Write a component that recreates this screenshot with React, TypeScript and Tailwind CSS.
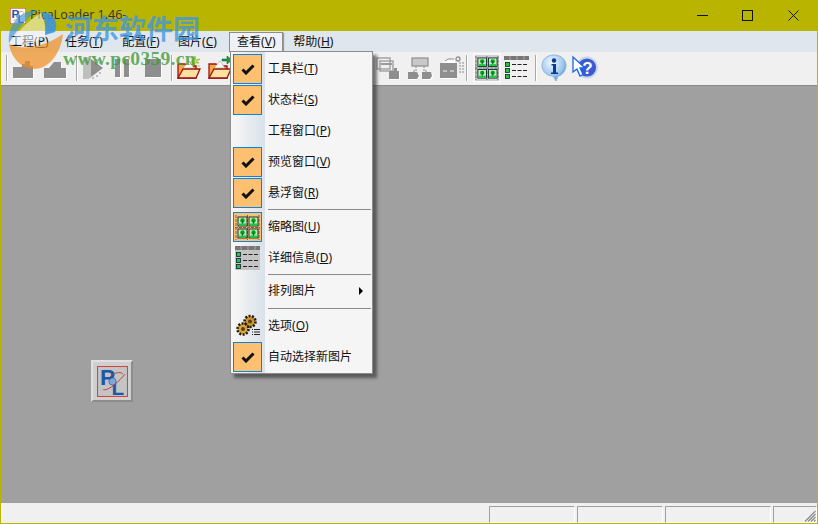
import type { ReactNode } from 'react'

const cjk = 'font-["Noto_Sans","Noto_Sans_CJK_SC",sans-serif]'

const menuBar = [
  { name: '工程', key: 'P', cls: 'ml-[9px]' },
  { name: '任务', key: 'T', cls: 'ml-[16.4px]' },
  { name: '配置', key: 'F', cls: 'ml-[19.4px]' },
  { name: '图片', key: 'C', cls: 'ml-[18.4px]' },
]

function Label({ name, k }: { name: string; k?: string }) {
  return (
    <span className="whitespace-nowrap">
      {name}
      {k && (
        <>
          (<span className="underline">{k}</span>)
        </>
      )}
    </span>
  )
}

function Check() {
  return (
    <svg width="14" height="12" viewBox="0 0 14 12">
      <path d="M1.5 6.5 L5 10 L12.5 2.5" fill="none" stroke="#111" strokeWidth="3" />
    </svg>
  )
}

function ThumbIcon({ size = 25 }: { size?: number }) {
  const cell = (x: number, y: number) => (
    <g key={`${x}-${y}`}>
      <rect x={x} y={y} width="9" height="9" fill="#b8ecb0" stroke="#123" strokeWidth="0.9" />
      <circle cx={x + 4.5} cy={y + 3.5} r="2.2" fill="#069a1c" />
      <rect x={x + 4} y={y + 4} width="1" height="3" fill="#063" />
      <rect x={x + 1} y={y + 6.5} width="7" height="2" fill="#16c93a" />
    </g>
  )
  return (
    <svg width={size} height={size} viewBox="0 0 25 25">
      <path d="M0 12.500H25M1 0V25M12.500 0V25M24 0V25" stroke="#666" strokeWidth="1" strokeDasharray="3 1" />
      {cell(3, 2)}
      {cell(14, 2)}
      {cell(3, 14)}
      {cell(14, 14)}
    </svg>
  )
}

function DetailIcon({ shaded }: { shaded?: boolean }) {
  return (
    <svg width="25" height="24" viewBox="0 0 25 24">
      {shaded && <rect x="0" y="4" width="25" height="20" fill="#c4c4c4" />}
      <rect x="0" y="0" width="25" height="4" fill="#777" />
      <path d="M6 0v4M13 0v4M20 0v4" stroke="#aaa" />
      {[6, 12, 18].map((y) => (
        <g key={y}>
          <rect x="1.500" y={y + 0.500} width="4" height="4" fill="#25c244" stroke="#123" strokeWidth="0.8" />
          <path d={`M8 ${y + 2.500}H24`} stroke="#222" strokeDasharray="4 1.500" />
        </g>
      ))}
    </svg>
  )
}

function GearIcon() {
  return (
    <svg width="24" height="24" viewBox="0 0 24 24">
      <circle cx="14" cy="7.500" r="5.500" fill="#c9983a" stroke="#2a1c05" strokeWidth="2.600" strokeDasharray="2 1.400" />
      <circle cx="14" cy="7.500" r="2" fill="#5c3f0c" />
      <circle cx="7" cy="15" r="5.500" fill="#d9a845" stroke="#2a1c05" strokeWidth="2.600" strokeDasharray="2 1.400" />
      <circle cx="7" cy="15" r="2" fill="#5c3f0c" />
      <path d="M16 15.500h1M18 15.500h6M16 18h1M18 18h6M16 20.500h1M18 20.500h6" stroke="#222" />
    </svg>
  )
}

function MenuRow({
  name,
  k,
  checked,
  icon,
  arrow,
}: {
  name: string
  k?: string
  checked?: boolean
  icon?: ReactNode
  arrow?: boolean
}) {
  return (
    <div className="flex h-[31px] items-start">
      <div
        className={`ml-[2px] flex h-[30px] w-[29px] shrink-0 items-center justify-center ${
          checked ? 'border border-[#0a84e0] bg-[#fdbf70]' : ''
        }`}
      >
        {checked && !icon && <Check />}
        {icon}
      </div>
      <div className="ml-[6px] flex h-[30px] flex-1 items-center text-[12px] leading-none text-[#111]">
        <Label name={name} k={k} />
      </div>
      {arrow && <div className="mr-[9px] mt-[11px] h-0 w-0 border-y-[4px] border-l-[4px] border-y-transparent border-l-black" />}
    </div>
  )
}

function Sep({ cls }: { cls: string }) {
  return <div className={`ml-[37px] mr-[1px] h-[1px] bg-[#8a8a8a] ${cls}`} />
}

// greyed out toolbar button: flat shape with a white edge bottom right
function Dis({ w, d, children }: { w: number; d: string; children?: ReactNode }) {
  return (
    <svg width={w} height="24" viewBox={`0 0 ${w} 24`}>
      <path d={d} fill="#fff" transform="translate(1 1)" />
      <path d={d} fill="#8e8e8e" />
      {children}
    </svg>
  )
}

function Folder({ arrow }: { arrow?: boolean }) {
  return (
    <svg width="24" height="24" viewBox="0 0 24 24">
      <path d="M1 8h7l2 2h9v12H1z" fill="#f6a83c" stroke="#a01010" strokeWidth="1.300" />
      <path d="M1 22l5-9h17l-4 9z" fill="#fbe2a0" stroke="#a01010" strokeWidth="1.300" />
      <path d="M6 12l6-7 5 7z" fill="#fff" stroke="#999" strokeWidth="0.600" />
      {arrow ? (
        <path d="M14 3h5V0l5 4-5 4V5h-5z" fill="#15a03a" stroke="#053" strokeWidth="0.500" />
      ) : (
        <path d="M13 7l3-3 2-4 1 4 4-1-4 3 3 1h-4l-2 3zM19 10h4" fill="#e6e23a" stroke="#7a9a10" strokeWidth="0.500" />
      )}
    </svg>
  )
}

function ToolSep() {
  return <div className="h-[26px] w-[1px] shrink-0 bg-[#a8a8a8] shadow-[1px_0_0_#fff]" />
}

function InfoIcon() {
  return (
    <svg width="26" height="28" viewBox="0 0 26 28">
      <defs>
        <radialGradient id="bub" cx="40%" cy="30%" r="75%">
          <stop offset="0%" stopColor="#f2f8ff" />
          <stop offset="65%" stopColor="#9cc8ee" />
          <stop offset="100%" stopColor="#3e86cc" />
        </radialGradient>
      </defs>
      <path d="M13 1c7 0 12 4.500 12 10.500S20 22 17 22l-2 5-3-5C6 22 1 17.500 1 11.500S6 1 13 1z" fill="url(#bub)" stroke="#8fb6d8" />
      <circle cx="13" cy="6.500" r="2.200" fill="#0a3a96" />
      <path d="M10.500 10h4.500v8.500h2v1.500h-7v-1.500h2v-7h-1.500z" fill="#0a3a96" />
    </svg>
  )
}

function HelpIcon() {
  return (
    <svg width="26" height="26" viewBox="0 0 26 26">
      <circle cx="15" cy="12.500" r="10" fill="#3a5cd0" stroke="#c9d4f0" strokeWidth="1.800" />
      <text x="15.500" y="18.500" textAnchor="middle" fontSize="17" fontWeight="700" fill="#fff" fontFamily="Liberation Sans, sans-serif">
        ?
      </text>
      <path d="M1 2v15l4-3 3 7 3-1.500-3-6.500h5z" fill="#fff" stroke="#1a64e8" strokeWidth="1.300" />
    </svg>
  )
}

function AppIcon({ size, bg = '#fff' }: { size: number; bg?: string }) {
  return (
    <svg width={size} height={size} viewBox="0 0 30 30">
      <rect x="0.500" y="0.500" width="29" height="29" fill={bg} stroke="#d8443c" />
      <text x="3" y="18" fontSize="22" fontWeight="700" fill="#1d57a8" fontFamily="Liberation Sans, sans-serif">
        P
      </text>
      <text x="14" y="28" fontSize="20" fontWeight="700" fill="#1d57a8" fontFamily="Liberation Sans, sans-serif">
        L
      </text>
      <circle cx="15" cy="15" r="3.500" fill="#7fa6d6" stroke="#1d57a8" strokeWidth="0.600" />
      <path d="M6 23C12 24 22 14 27 8M13 10C18 5 25 6 25 8" fill="none" stroke="#c8343c" strokeWidth="0.900" />
    </svg>
  )
}

function Watermark() {
  return (
    <div className="pointer-events-none absolute left-0 top-[10px] h-[76px] w-[210px]">
      <svg className="absolute left-0 top-0" width="66" height="62" viewBox="0 0 66 62">
        <path d="M8 33C6 16 18 1 36 0C30 6 20 13 8 33z" fill="#3d93d8" opacity="0.65" />
        <path d="M9 33C18 19 30 9 40 3C44 13 45 19 44 26C36 33 22 37 9 33z" fill="#fff" opacity="0.5" />
        <path d="M40 2C53 2 58 13 54 22L44 25C45 16 44 8 40 2z" fill="#3d93e0" opacity="0.9" />
        <path d="M8 34C22 41 44 37 62 24C60 43 48 59 33 59C20 59 10 47 8 34z" fill="#f08c1e" opacity="0.7" />
      </svg>
      <div className="absolute left-[64px] top-[2px] whitespace-nowrap font-['Noto_Sans_CJK_SC',sans-serif] text-[27px] font-bold leading-[32px] text-[#3f97e0]/80">
        河东软件园
      </div>
      <div className='absolute left-[62px] top-[37px] whitespace-nowrap font-["Liberation_Serif",serif] text-[19.5px] font-bold leading-[24px] tracking-[0.3px] text-[#3d9a3a]/80'>
        www.pc0359.cn
      </div>
    </div>
  )
}

export default function App() {
  return (
    <div className={`relative flex h-[524px] w-[818px] flex-col overflow-hidden border-x border-b border-[#b8b400] bg-[#b8b400] ${cjk}`}>
      {/* title bar */}
      <div className="flex h-[31px] shrink-0 items-center bg-[#b8b400]">
        <div className="ml-[9px]">
          <AppIcon size={16} />
        </div>
        <div className='ml-[4px] flex-1 font-["Open_Sans",sans-serif] text-[12.5px] text-[#333]'>PicaLoader 1.46-</div>
        <svg className="mr-[34px]" width="11" height="11" viewBox="0 0 11 11">
          <path d="M0 5.500H11" stroke="#111" />
        </svg>
        <svg className="mr-[35px]" width="11" height="11" viewBox="0 0 11 11">
          <rect x="0.500" y="0.500" width="10" height="10" fill="none" stroke="#111" />
        </svg>
        <svg className="mr-[18px]" width="11" height="11" viewBox="0 0 11 11">
          <path d="M0.500 0.500L10.500 10.500M10.500 0.500L0.500 10.500" stroke="#111" />
        </svg>
      </div>

      {/* menu bar */}
      <div className="flex h-[21px] shrink-0 items-center bg-[#dfe6ee] text-[12px] text-[#111]">
        {menuBar.map((m) => (
          <div key={m.key} className={m.cls}>
            <Label name={m.name} k={m.key} />
          </div>
        ))}
        <div className="ml-[12.4px] flex h-[20px] w-[54px] items-center justify-center border border-[#8c8c8c] bg-[#eef1f5] shadow-[1px_1px_1px_#9a9a9a]">
          <Label name="查看" k="V" />
        </div>
        <div className="ml-[10px]">
          <Label name="帮助" k="H" />
        </div>
      </div>

      {/* toolbar */}
      <div className="flex h-[33px] shrink-0 items-center bg-[#f0f0f0] pb-[1px]">
        <div className="ml-[5px] h-[26px] w-[2px] shrink-0 border-l border-[#aaa] bg-white" />
        <div className="ml-[4px] flex w-[60px] shrink-0 gap-[7px]">
          <Dis w={24} d="M1 11h9V8h3V5h5v5h3v12H1z" />
          <Dis w={24} d="M1 12h5l5-6h7v6h5v10H1z" />
        </div>
        <div className="ml-[4px]">
          <ToolSep />
        </div>
        <div className="ml-[6px] flex w-[84px] shrink-0 items-center">
          <svg width="21" height="24" viewBox="0 0 21 24">
            <path d="M1 1v22M3 1v22M5 1v22M7 2v20" stroke="#8e8e8e" />
            <path d="M8 3l12 9-12 9z" fill="#8e8e8e" />
            <path d="M9 1h2M13 4h2M16 7h2M16 17h2M13 20h2M9 22h2" stroke="#8e8e8e" />
          </svg>
          <div className="ml-[9px]">
            <Dis w={18} d="M2 3h5v18H2zM11 3h5v18h-5z" />
          </div>
          <div className="ml-[12px]">
            <Dis w={20} d="M2 3h16v18H2z" />
          </div>
        </div>
        <div className="ml-[4px]">
          <ToolSep />
        </div>
        <div className="ml-[5px]">
          <Folder />
        </div>
        <div className="ml-[7px]">
          <Folder arrow />
        </div>
        <div className="ml-[143px] flex w-[90px] shrink-0 gap-[6px]">
          <svg width="26" height="24" viewBox="0 0 26 24">
            <g fill="none" stroke="#9a9a9a" strokeWidth="1.300">
              <rect x="2" y="2" width="13" height="11" />
              <rect x="5" y="5" width="13" height="10" />
            </g>
            <path d="M6 7h11v2H6z" fill="#9a9a9a" />
            <path d="M14 15h5v-3h3v3h2v8h-10z" fill="#fff" transform="translate(1 1)" />
            <path d="M14 15h5v-3h3v3h2v8h-10z" fill="#8e8e8e" />
          </svg>
          <svg width="26" height="24" viewBox="0 0 26 24">
            <rect x="5" y="2" width="16" height="8" fill="#c8c8c8" stroke="#8e8e8e" strokeWidth="1.200" />
            <path d="M9 10v5H5M17 10v5h4" fill="none" stroke="#8e8e8e" strokeDasharray="2 1" />
            <path d="M1 16h9l2 4-2 3H1zM15 16h9l1 4-2 3h-8z" fill="#fff" transform="translate(1 1)" />
            <path d="M1 16h9l2 4-2 3H1zM15 16h9l1 4-2 3h-8z" fill="#8e8e8e" />
          </svg>
          <svg width="26" height="24" viewBox="0 0 26 24">
            <path d="M1 7l6-4h8v19H1z" fill="#fff" transform="translate(1 1)" />
            <path d="M1 7h17v15H1z" fill="#8e8e8e" />
            <path d="M6 5l3-2h6" fill="none" stroke="#8e8e8e" />
            <path d="M4 15h4M11 15h4" stroke="#f0f0f0" />
            <path d="M20 7h5M20 10h5M20 13h5M20 16h5" stroke="#8e8e8e" strokeDasharray="2 1" />
            <circle cx="19" cy="3" r="2" fill="none" stroke="#8e8e8e" strokeWidth="1.300" />
          </svg>
        </div>
        <div className="ml-[1px]">
          <ToolSep />
        </div>
        <div className="ml-[6px] flex h-[30px] w-[28px] shrink-0 items-center justify-center border-2 border-[#f8f8f8] bg-[#d0d0d0]">
          <ThumbIcon size={24} />
        </div>
        <div className="ml-[3px]">
          <DetailIcon />
        </div>
        <div className="ml-[6px]">
          <ToolSep />
        </div>
        <div className="ml-[5px]">
          <InfoIcon />
        </div>
        <div className="ml-[5px]">
          <HelpIcon />
        </div>
      </div>

      {/* work area */}
      <div className="flex-1 border-t border-[#8a8a8a] bg-[#a0a0a0] pl-[90px] pt-[274px]">
        <div className="flex h-[42px] w-[42px] items-center justify-center border-2 border-t-[#e0e0e0] border-l-[#e0e0e0] border-r-[#8c8c8c] border-b-[#8c8c8c] bg-[#cfcfcf]">
          <AppIcon size={31} bg="#c4c4c4" />
        </div>
      </div>

      {/* status bar */}
      <div className="flex h-[20px] shrink-0 items-stretch justify-end bg-[#f0f0f0] pt-[3px]">
        <div className="mr-[2px] w-[86px] border border-[#a0a0a0] border-b-white border-r-white" />
        <div className="mr-[2px] w-[86px] border border-[#a0a0a0] border-b-white border-r-white" />
        <div className="mr-[2px] w-[106px] border border-[#a0a0a0] border-b-white border-r-white" />
        <div className="relative w-[44px] border border-[#a0a0a0] border-b-white border-r-white">
          <svg className="absolute bottom-0 right-0" width="12" height="12" viewBox="0 0 12 12">
            <path d="M11.500 1L1 11.500M11.500 4L4 11.500M11.500 7L7 11.500M11.500 10L10 11.500" stroke="#8a8a8a" strokeWidth="1.200" />
          </svg>
        </div>
      </div>

      {/* view menu */}
      <div className="absolute left-[229px] top-[51px] w-[143px] border border-[#8c8c8c] bg-[#f5f5f5] pt-[2px] shadow-[4px_4px_3px_rgba(60,60,60,0.7)]">
        <div className="absolute bottom-0 left-0 top-0 w-[34px] bg-gradient-to-r from-[#f8f8f8] to-[#d9e1ea]" />
        <div className="relative">
          <MenuRow name="工具栏" k="T" checked />
          <MenuRow name="状态栏" k="S" checked />
          <MenuRow name="工程窗口" k="P" />
          <MenuRow name="预览窗口" k="V" checked />
          <MenuRow name="悬浮窗" k="R" checked />
          <Sep cls="mb-[2px]" />
          <MenuRow name="缩略图" k="U" checked icon={<ThumbIcon size={25} />} />
          <MenuRow name="详细信息" k="D" icon={<DetailIcon shaded />} />
          <Sep cls="mb-[1px]" />
          <MenuRow name="排列图片" arrow />
          <Sep cls="mt-[1px] mb-[2px]" />
          <MenuRow name="选项" k="O" icon={<GearIcon />} />
          <MenuRow name="自动选择新图片" checked />
        </div>
      </div>

      <Watermark />
    </div>
  )
}
